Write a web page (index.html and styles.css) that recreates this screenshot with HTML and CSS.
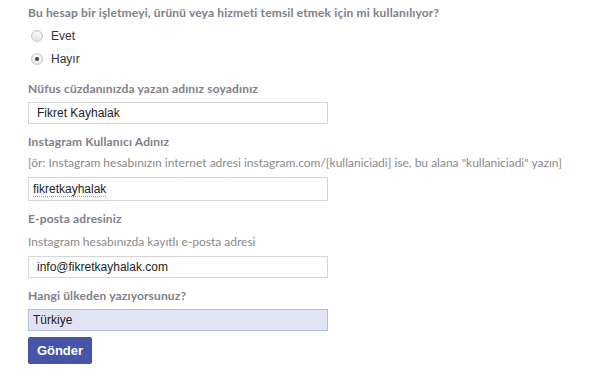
FILE: index.html
```html
<!DOCTYPE html>
<html lang="tr">
<head>
  <meta charset="UTF-8" />
  <title>Başvuru Formu</title>
  <link rel="stylesheet" href="styles.css">
</head>
<body>
  <form class="form">
    <div class="question">Bu hesap bir işletmeyi, ürünü veya hizmeti temsil etmek için mi kullanılıyor?</div>
    <label class="radio-row"><span class="radio"></span>Evet</label>
    <label class="radio-row"><span class="radio checked"></span>Hayır</label>

    <div class="label first">Nüfus cüzdanınızda yazan adınız soyadınız</div>
    <div class="field">Fikret Kayhalak</div>

    <div class="label">Instagram Kullanıcı Adınız</div>
    <div class="hint">[ör: Instagram hesabınızın internet adresi instagram.com/[kullaniciadi] ise, bu alana "kullaniciadi" yazın]</div>
    <div class="field tight"><span class="spell">fikretkayhalak</span></div>

    <div class="label">E-posta adresiniz</div>
    <div class="hint wide">Instagram hesabınızda kayıtlı e-posta adresi</div>
    <div class="field">info@fikretkayhalak.com</div>

    <div class="label">Hangi ülkeden yazıyorsunuz?</div>
    <div class="select">Türkiye</div>
    <button type="button" class="submit">Gönder</button>
  </form>
</body>
</html>
```

FILE: styles.css
```css
* {
  box-sizing: border-box;
}

body {
  margin: 0;
  background: #fff;
  font-family: 'Lato', 'Liberation Sans', sans-serif;
  color: #7a7a7a;
}

.form {
  display: flex;
  flex-direction: column;
  align-items: flex-start;
  padding: 5px 0 0 28px;
}

.question,
.label {
  font-size: 12px;
  font-weight: 700;
  color: #80808a;
  line-height: 16px;
  letter-spacing: 0.15px;
}

.radio-row {
  display: flex;
  align-items: center;
  gap: 8px;
  margin-top: 7px;
  height: 16px;
  padding-left: 3px;
  font-family: 'Liberation Sans', sans-serif;
  font-size: 12px;
  color: #333;
}

.radio {
  width: 12px;
  height: 12px;
  border-radius: 50%;
  border: 1px solid #c8c8c8;
  background: linear-gradient(#fdfdfd, #e6e6e6);
  box-shadow: inset 0 1px 1px rgba(0, 0, 0, 0.08);
  position: relative;
}

.radio.checked::after {
  content: "";
  position: absolute;
  left: 3px;
  top: 3px;
  width: 4px;
  height: 4px;
  border-radius: 50%;
  background: #444;
}

.label {
  margin-top: 10px;
}

.label.first {
  margin-top: 14px;
}

.hint {
  font-size: 12px;
  color: #8a8a8a;
  line-height: 16px;
  margin-top: 5px;
}

.hint.wide {
  margin-top: 7px;
}

.field {
  width: 300px;
  height: 22px;
  margin-top: 5px;
  border: 1px solid #d6d6d6;
  padding: 0 0 0 8px;
  font-family: 'Liberation Sans', sans-serif;
  font-size: 12px;
  color: #222;
  line-height: 20px;
}

.hint + .field {
  margin-top: 6px;
}

.field.tight {
  height: 24px;
  padding-left: 4px;
  line-height: 22px;
}

.spell {
  text-decoration: underline dotted #e08080;
  text-underline-offset: 3px;
}

.select {
  width: 300px;
  height: 22px;
  margin-top: 5px;
  border: 1px solid #b3bcd8;
  background: #dfe3f3;
  padding-left: 4px;
  font-family: 'Liberation Sans', sans-serif;
  font-size: 12px;
  color: #222;
  line-height: 20px;
}

.submit {
  margin-top: 6px;
  width: 64px;
  height: 27px;
  border: none;
  border-radius: 2px;
  background: #4655a8;
  color: #fff;
  font-family: 'Liberation Sans', sans-serif;
  font-weight: 700;
  font-size: 13px;
  padding: 0;
}
```
